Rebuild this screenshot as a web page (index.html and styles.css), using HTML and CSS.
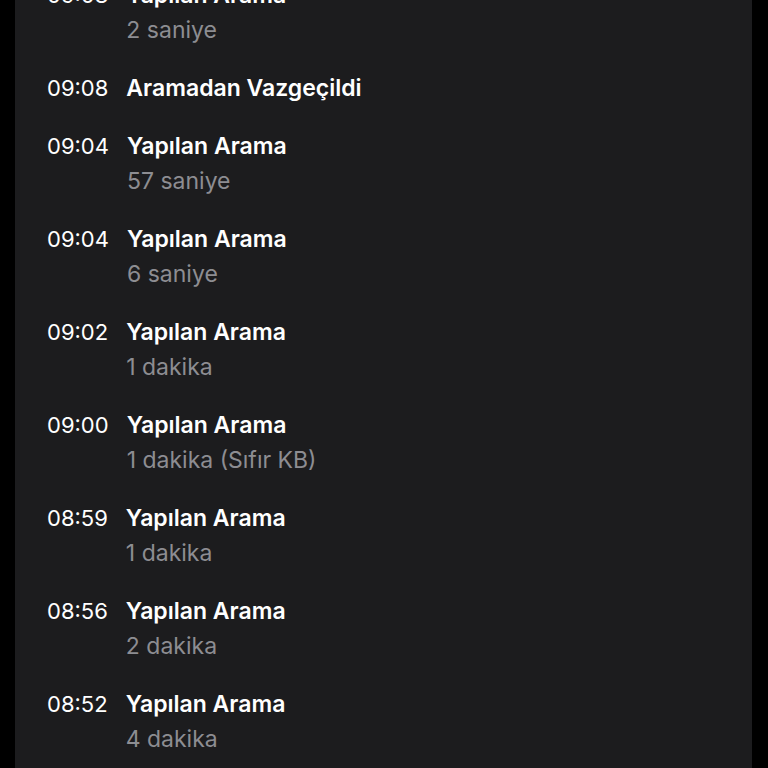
FILE: index.html
```html
<!DOCTYPE html>
<html lang="tr">

<head>
    <meta charset="utf-8">
    <title>Arama Geçmişi</title>
    <link rel="stylesheet" href="styles.css">
</head>

<body>
    <div class="card">
        <ul class="calls">
            <li class="call">
                <span class="time">09:08</span>
                <div class="info">
                    <div class="title">Yapılan Arama</div>
                    <div class="duration">2 saniye</div>
                </div>
            </li>
            <li class="call">
                <span class="time">09:08</span>
                <div class="info">
                    <div class="title">Aramadan Vazgeçildi</div>
                </div>
            </li>
            <li class="call">
                <span class="time">09:04</span>
                <div class="info">
                    <div class="title">Yapılan Arama</div>
                    <div class="duration">57 saniye</div>
                </div>
            </li>
            <li class="call">
                <span class="time">09:04</span>
                <div class="info">
                    <div class="title">Yapılan Arama</div>
                    <div class="duration">6 saniye</div>
                </div>
            </li>
            <li class="call">
                <span class="time">09:02</span>
                <div class="info">
                    <div class="title">Yapılan Arama</div>
                    <div class="duration">1 dakika</div>
                </div>
            </li>
            <li class="call">
                <span class="time">09:00</span>
                <div class="info">
                    <div class="title">Yapılan Arama</div>
                    <div class="duration">1 dakika (Sıfır KB)</div>
                </div>
            </li>
            <li class="call">
                <span class="time">08:59</span>
                <div class="info">
                    <div class="title">Yapılan Arama</div>
                    <div class="duration">1 dakika</div>
                </div>
            </li>
            <li class="call">
                <span class="time">08:56</span>
                <div class="info">
                    <div class="title">Yapılan Arama</div>
                    <div class="duration">2 dakika</div>
                </div>
            </li>
            <li class="call">
                <span class="time">08:52</span>
                <div class="info">
                    <div class="title">Yapılan Arama</div>
                    <div class="duration">4 dakika</div>
                </div>
            </li>
        </ul>
    </div>
</body>

</html>
```

FILE: styles.css
```css
html,
body {
    margin: 0;
    padding: 0;
    background-color: #000;
    height: 768px;
    overflow: hidden;
}

.card {
    display: flow-root;
    margin: 0 16px 0 15px;
    height: 100%;
    background-color: #1c1c1e;
    font-family: Inter, "Noto Sans", sans-serif;
    font-size: 22px;
    color: #fff;
}

.calls {
    list-style-type: none;
    margin: -22px 0 0 0;
    padding: 0 0 0 32px;
}

.call {
    display: flex;
    gap: 18px;
    padding-bottom: 23px;
    line-height: 35px;
}

.time {
    font-weight: 400;
}

.title {
    font-size: 23px;
    font-weight: 600;
}

.duration {
    font-size: 23px;
    color: #8d8d92;
}
```
